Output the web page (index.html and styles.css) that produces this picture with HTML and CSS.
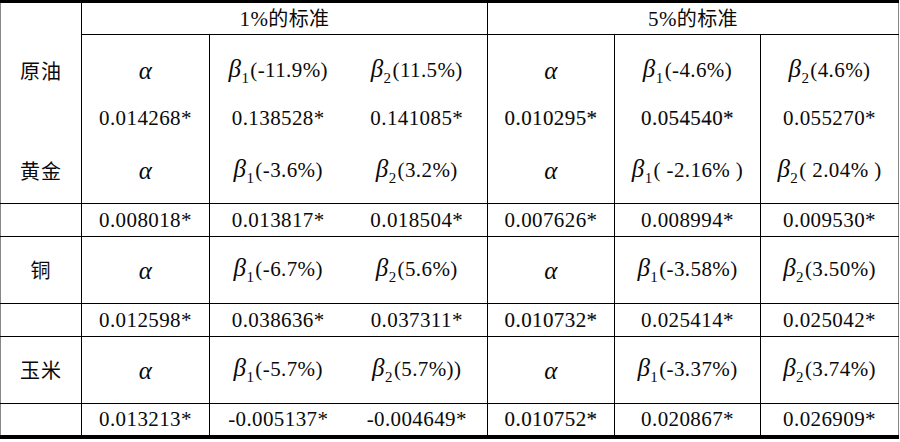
FILE: index.html
```html
<!DOCTYPE html>
<html>
<head>
<meta charset="utf-8">
<link rel="stylesheet" href="styles.css">
</head>
<body>
<table class="t">
  <colgroup>
    <col class="c1"><col class="c2"><col class="c3"><col class="c4"><col class="c5"><col class="c6"><col class="c7">
  </colgroup>
  <tr class="r-head">
    <td></td>
    <td colspan="3" class="grp vl"><span class="num">1%</span><span class="cjk">的标准</span></td>
    <td colspan="3" class="grp vl"><span class="num">5%</span><span class="cjk">的标准</span></td>
  </tr>
  <tr class="r-a">
    <td class="lbl">原油</td>
    <td class="vl"><i class="al">α</i></td>
    <td class="vl"><i class="be">β</i><sub>1</sub>(-11.9%)</td>
    <td><i class="be">β</i><sub>2</sub>(11.5%)</td>
    <td class="vl"><i class="al">α</i></td>
    <td class="vl"><i class="be">β</i><sub>1</sub>(-4.6%)</td>
    <td class="vl"><i class="be">β</i><sub>2</sub>(4.6%)</td>
  </tr>
  <tr class="r-b">
    <td></td>
    <td class="vl">0.014268*</td>
    <td class="vl">0.138528*</td>
    <td>0.141085*</td>
    <td class="vl bd">0.010295*</td>
    <td class="vl bd">0.054540*</td>
    <td class="vl">0.055270*</td>
  </tr>
  <tr class="r-c hb">
    <td class="lbl">黄金</td>
    <td class="vl"><i class="al">α</i></td>
    <td class="vl"><i class="be">β</i><sub>1</sub>(-3.6%)</td>
    <td><i class="be">β</i><sub>2</sub>(3.2%)</td>
    <td class="vl"><i class="al">α</i></td>
    <td class="vl"><i class="be">β</i><sub>1</sub>( -2.16% )</td>
    <td class="vl"><i class="be">β</i><sub>2</sub>( 2.04% )</td>
  </tr>
  <tr class="r-v hb">
    <td></td>
    <td class="vl">0.008018*</td>
    <td class="vl">0.013817*</td>
    <td>0.018504*</td>
    <td class="vl">0.007626*</td>
    <td class="vl">0.008994*</td>
    <td class="vl">0.009530*</td>
  </tr>
  <tr class="r-s hb">
    <td class="lbl">铜</td>
    <td class="vl"><i class="al">α</i></td>
    <td class="vl"><i class="be">β</i><sub>1</sub>(-6.7%)</td>
    <td><i class="be">β</i><sub>2</sub>(5.6%)</td>
    <td class="vl"><i class="al">α</i></td>
    <td class="vl"><i class="be">β</i><sub>1</sub>(-3.58%)</td>
    <td class="vl"><i class="be">β</i><sub>2</sub>(3.50%)</td>
  </tr>
  <tr class="r-v hb">
    <td></td>
    <td class="vl">0.012598*</td>
    <td class="vl">0.038636*</td>
    <td>0.037311*</td>
    <td class="vl bd">0.010732*</td>
    <td class="vl">0.025414*</td>
    <td class="vl">0.025042*</td>
  </tr>
  <tr class="r-s hb">
    <td class="lbl">玉米</td>
    <td class="vl"><i class="al">α</i></td>
    <td class="vl"><i class="be">β</i><sub>1</sub>(-5.7%)</td>
    <td><i class="be">β</i><sub>2</sub>(5.7%))</td>
    <td class="vl"><i class="al">α</i></td>
    <td class="vl"><i class="be">β</i><sub>1</sub>(-3.37%)</td>
    <td class="vl"><i class="be">β</i><sub>2</sub>(3.74%)</td>
  </tr>
  <tr class="r-v">
    <td></td>
    <td class="vl">0.013213*</td>
    <td class="vl">-0.005137*</td>
    <td>-0.004649*</td>
    <td class="vl bd">0.010752*</td>
    <td class="vl">0.020867*</td>
    <td class="vl">0.026909*</td>
  </tr>
</table>
</body>
</html>
```

FILE: styles.css
```css
html, body {
  margin: 0;
  padding: 0;
  background: #fff;
  font-family: "Liberation Serif", "Times New Roman", serif;
}

.t {
  border-collapse: collapse;
  table-layout: fixed;
  width: 899px;
  border-top: 3px solid #000;
  border-bottom: 4px solid #000;
  border-left: 1px solid #888;
  border-right: 1px solid #888;
  font-size: 21px;
  color: #0a0a0a;
}

.c1 { width: 81px; }
.c2 { width: 128px; }
.c3 { width: 137px; }
.c4 { width: 141px; }
.c5 { width: 127px; }
.c6 { width: 146px; }
.c7 { width: 138px; }

.t td {
  font-family: "Liberation Serif", "Times New Roman", serif;
  padding: 0;
  text-align: center;
  vertical-align: middle;
  white-space: nowrap;
  line-height: 1;
  letter-spacing: 0.4px;
}

.t .vl { border-left: 1px solid #000; }
.t .hb td { border-bottom: 1px solid #000; }

.t .grp {
  border-bottom: 1px solid #000;
}

.grp .cjk {
  font-family: "Noto Sans CJK SC", sans-serif;
  font-size: 20px;
  font-weight: 400;
}

.t .lbl {
  font-family: "Noto Sans CJK SC", sans-serif;
  font-size: 20px;
  letter-spacing: 1px;
}

.r-head { height: 33px; }
.r-a { height: 72px; }
.r-b { height: 24px; }
.r-c { height: 73px; }
.t .r-c td { padding-top: 8px; }
.r-v { height: 33px; }
.r-s { height: 67px; }

.al,
.be {
  font-size: 25px;
  font-style: italic;
}

sub {
  font-size: 15px;
  vertical-align: -6px;
  margin-right: 1px;
}

.bd {
  -webkit-text-stroke: 0.12px #0a0a0a;
}
```
